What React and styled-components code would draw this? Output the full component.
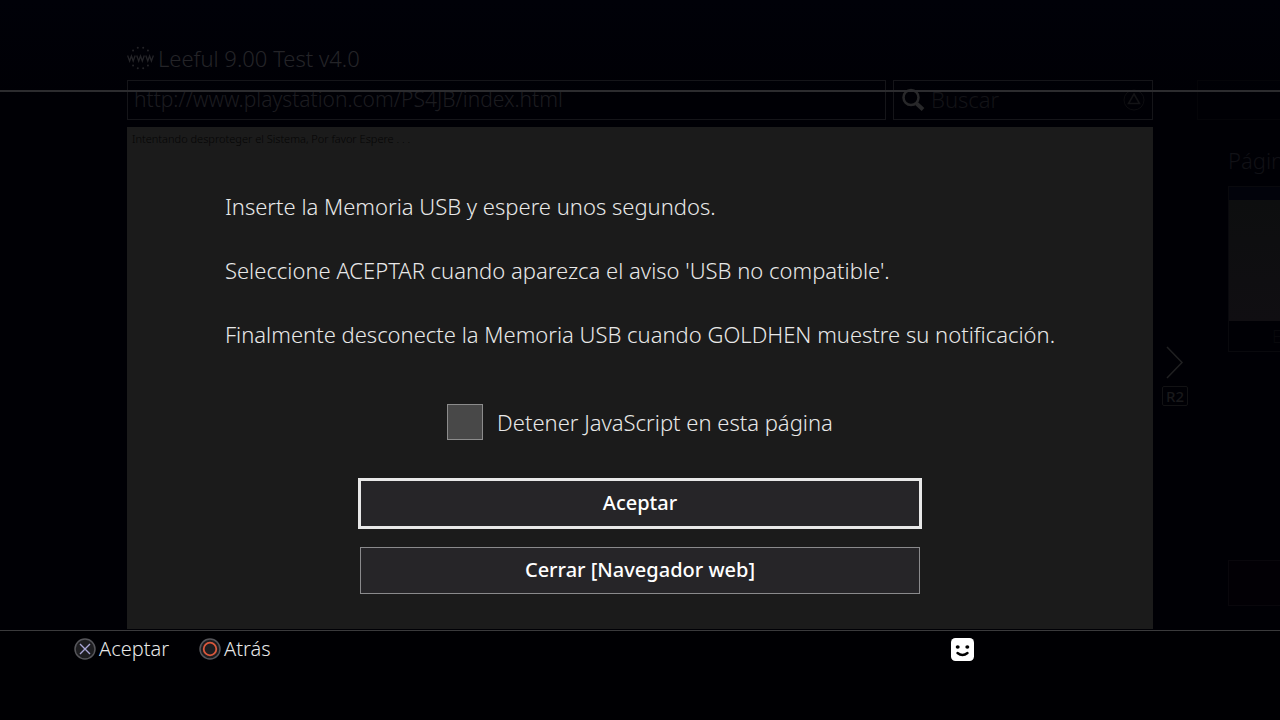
import React, { useState } from 'react';
import styled, { createGlobalStyle } from 'styled-components';

const GlobalStyle = createGlobalStyle`
  * {
    box-sizing: border-box;
  }
  body {
    margin: 0;
    background-color: #000005;
    color: #e8e8e8;
    font-family: 'Noto Sans', 'Open Sans', sans-serif;
    font-size: 22px;
    font-weight: 300;
    line-height: 32px;
  }
  button,
  input {
    font: inherit;
    color: inherit;
  }
`;

const Screen = styled.div`
  position: relative;
  min-height: 100vh;
  display: flex;
  overflow: hidden;
  background: linear-gradient(#000108, #000005 100px);
`;

/* Browser, dimmed behind the dialog */
const Browser = styled.div`
  flex: 1;
  min-width: 0;
  display: flex;
  flex-direction: column;
  padding: 42px 0 91px 127px;
`;

const TitleBar = styled.header`
  display: flex;
  align-items: center;
  gap: 4px;
  height: 32px;
  margin-bottom: 6px;
  color: #242428;
`;

const Title = styled.h1`
  margin: 0;
  font-size: 22px;
  font-weight: 300;
`;

const Toolbar = styled.div`
  display: flex;
  gap: 7px;
  margin-bottom: 7px;
`;

const Field = styled.label`
  display: flex;
  align-items: center;
  gap: 6px;
  flex: ${(props) => (props.$grow ? '1' : '0 0 260px')};
  min-width: 0;
  height: 40px;
  padding: 0 6px 0 ${(props) => (props.$grow ? '6px' : '7px')};
  border: 1px solid #151519;
`;

const FieldInput = styled.input`
  flex: 1;
  min-width: 0;
  height: 36px;
  padding: 0 0 2px;
  border: none;
  outline: none;
  background: none;
  color: ${(props) => props.$color};
  font-size: ${(props) => props.$size};
  &::placeholder {
    color: #131317;
    opacity: 1;
  }
`;

const WebPage = styled.main`
  flex: 1;
  padding: 4px 5px;
  background-color: #1b1b1b;
  color: #050505;
  font-size: 11px;
  line-height: 16px;
`;

const Rail = styled.div`
  flex: 0 0 44px;
  display: flex;
  flex-direction: column;
  align-items: center;
  gap: 6px;
  padding-top: 344px;
`;

const KeyCap = styled.span`
  padding: 0 3px;
  border: 1px solid #121214;
  border-radius: 2px;
  color: #19191b;
  font-size: 15px;
  font-weight: 500;
  line-height: 18px;
`;

const SidePanel = styled.aside`
  flex: 0 0 83px;
  padding-top: 80px;
  overflow: hidden;
`;

const SideHeader = styled.div`
  height: 40px;
  border: 1px solid #050509;
  border-right: none;
`;

const SideBody = styled.div`
  padding: 24px 0 0 31px;
  color: #111116;
`;

const Thumbnail = styled.div`
  margin-top: 10px;
  border: 1px solid #09090d;
  border-right: none;
`;

const ThumbnailPicture = styled.div`
  height: 134px;
  border-top: 13px solid #02030b;
  background: linear-gradient(#0d0e0f, #100e12);
`;

const ThumbnailName = styled.div`
  padding-left: 43px;
  font-size: 18px;
  line-height: 30px;
  color: #08080c;
`;

const SideBox = styled.div`
  height: 46px;
  margin-top: 208px;
  border: 1px solid #09070c;
  border-right: none;
  background-color: #020005;
`;

/* System dialog */
const Overlay = styled.div`
  position: absolute;
  inset: 0;
  display: flex;
  flex-direction: column;
  padding-top: 90px;
`;

const Dialog = styled.section`
  flex: 1;
  display: flex;
  flex-direction: column;
  align-items: center;
  padding: 98px 40px 36px;
  border-top: 2px solid #2c2c2f;
`;

const Message = styled.div`
  display: flex;
  flex-direction: column;
  gap: 32px;
  margin-bottom: 54px;
`;

const Paragraph = styled.p`
  margin: 0;
`;

const CheckRow = styled.label`
  display: flex;
  align-items: center;
  gap: 14px;
  margin-bottom: 40px;
`;

const Checkbox = styled.input`
  appearance: none;
  width: 36px;
  height: 36px;
  margin: 0;
  border: 1px solid #8c8c8c;
  background-color: #484848;
  &:checked {
    background-color: #8c8c8c;
  }
`;

const Actions = styled.div`
  display: flex;
  flex-direction: column;
  gap: 20px;
  width: 560px;
  max-width: 100%;
`;

const ActionButton = styled.button`
  height: 47px;
  padding: 0 0 2px;
  border: 1px solid ${(props) => (props.$selected ? '#e8e8e8' : '#8a8a8c')};
  box-shadow: ${(props) => (props.$selected ? '0 0 0 2px #e8e8e8' : 'none')};
  background-color: #262528;
  color: #fff;
  font-size: 20px;
  font-weight: 500;
  outline: none;
  cursor: pointer;
`;

const Footer = styled.footer`
  display: flex;
  align-items: flex-start;
  gap: 30px;
  height: 90px;
  padding: 2px 306px 0 74px;
  border-top: 1px solid #3a3a3c;
  background-color: #000003;
`;

const Hint = styled.button`
  display: flex;
  align-items: center;
  gap: 3px;
  padding: 0;
  border: none;
  background: none;
  font-size: 20px;
`;

const Face = styled.svg`
  margin: 5px 0 0 auto;
`;

function WwwIcon() {
  const dots = [...Array(12).keys()].map((i) => (i * Math.PI) / 6 + Math.PI / 12);
  return (
    <svg width="27" height="26" viewBox="0 0 27 26" fill="none" stroke="#242428" strokeWidth="1.3">
      {dots
        .filter((a) => Math.abs(Math.sin(a)) > 0.4)
        .map((a) => (
          <circle key={a} cx={13.5 + 10.5 * Math.cos(a)} cy={13 + 10.5 * Math.sin(a)} r="1" fill="#242428" stroke="none" />
        ))}
      <path d="M.6 10.500l2 5.500 1.800-5 1.800 5 2-5.500M9.700 10.500l2 5.500 1.800-5 1.800 5 2-5.500M18.800 10.500l2 5.500 1.800-5 1.800 5 2-5.500" />
    </svg>
  );
}

function SearchIcon() {
  return (
    <svg width="24" height="24" viewBox="0 0 24 24" fill="none" stroke="#28282a">
      <circle cx="10" cy="9.500" r="7.500" strokeWidth="2.500" />
      <path d="M15.500 15.500l6.500 6" strokeWidth="4" />
    </svg>
  );
}

function TriangleIcon() {
  return (
    <svg width="24" height="24" viewBox="0 0 24 24" fill="none" stroke="#131316">
      <circle cx="12" cy="12" r="10" strokeWidth="1" stroke="#0d0d10" />
      <path d="M12 6l5.500 9.500h-11z" strokeWidth="1.500" />
    </svg>
  );
}

function CrossIcon() {
  return (
    <svg width="22" height="22" viewBox="0 0 22 22" fill="none">
      <circle cx="11" cy="11" r="10" fill="#1d1d20" stroke="#55555a" strokeWidth="1.500" />
      <path d="M6 6l10 10M16 6L6 16" stroke="#a9a6d6" strokeWidth="1.400" />
    </svg>
  );
}

function CircleIcon() {
  return (
    <svg width="22" height="22" viewBox="0 0 22 22" fill="none">
      <circle cx="11" cy="11" r="10" fill="#1d1d20" stroke="#55555a" strokeWidth="1.500" />
      <circle cx="11" cy="11" r="6.300" stroke="#d9583c" strokeWidth="1.800" />
    </svg>
  );
}

function App() {
  const [stopScripts, setStopScripts] = useState(false);
  const [address, setAddress] = useState('http://www.playstation.com/PS4JB/index.html');

  return (
    <>
      <GlobalStyle />
      <Screen>
        <Browser>
          <TitleBar>
            <WwwIcon />
            <Title>Leeful 9.00 Test v4.0</Title>
          </TitleBar>
          <Toolbar>
            <Field $grow>
              <FieldInput
                type="text"
                aria-label="URL"
                $color="#1c1c20"
                $size="21px"
                value={address}
                onChange={(e) => setAddress(e.target.value)}
              />
            </Field>
            <Field>
              <SearchIcon />
              <FieldInput type="text" aria-label="Buscar" placeholder="Buscar" $color="#131317" $size="22px" />
              <TriangleIcon />
            </Field>
          </Toolbar>
          <WebPage>Intentando desproteger el Sistema, Por favor Espere . . .</WebPage>
        </Browser>

        <Rail>
          <svg width="18" height="36" viewBox="0 0 18 36" fill="none" stroke="#202022" strokeWidth="1.500">
            <path d="M1 3l15 15.500L1 34" />
          </svg>
          <KeyCap>R2</KeyCap>
        </Rail>

        <SidePanel>
          <SideHeader />
          <SideBody>
            Página
            <Thumbnail>
              <ThumbnailPicture />
              <ThumbnailName>E</ThumbnailName>
            </Thumbnail>
            <SideBox />
          </SideBody>
        </SidePanel>

        <Overlay>
          <Dialog role="dialog">
            <Message>
              <Paragraph>Inserte la Memoria USB y espere unos segundos.</Paragraph>
              <Paragraph>Seleccione ACEPTAR cuando aparezca el aviso 'USB no compatible'.</Paragraph>
              <Paragraph>Finalmente desconecte la Memoria USB cuando GOLDHEN muestre su notificación.</Paragraph>
            </Message>
            <CheckRow>
              <Checkbox
                type="checkbox"
                checked={stopScripts}
                onChange={(e) => setStopScripts(e.target.checked)}
              />
              Detener JavaScript en esta página
            </CheckRow>
            <Actions>
              <ActionButton $selected>Aceptar</ActionButton>
              <ActionButton>Cerrar [Navegador web]</ActionButton>
            </Actions>
          </Dialog>
          <Footer>
            <Hint>
              <CrossIcon />
              Aceptar
            </Hint>
            <Hint>
              <CircleIcon />
              Atrás
            </Hint>
            <Face width="23" height="23" viewBox="0 0 23 23" fill="none">
              <rect width="23" height="23" rx="4.500" fill="#fff" />
              <ellipse cx="6.700" cy="9" rx="2" ry="1.800" fill="#000" />
              <ellipse cx="16.300" cy="9" rx="2" ry="1.800" fill="#000" />
              <path d="M6.500 15q5 4 10 0" stroke="#000" strokeWidth="2.400" strokeLinecap="round" />
            </Face>
          </Footer>
        </Overlay>
      </Screen>
    </>
  );
}

export default App;
